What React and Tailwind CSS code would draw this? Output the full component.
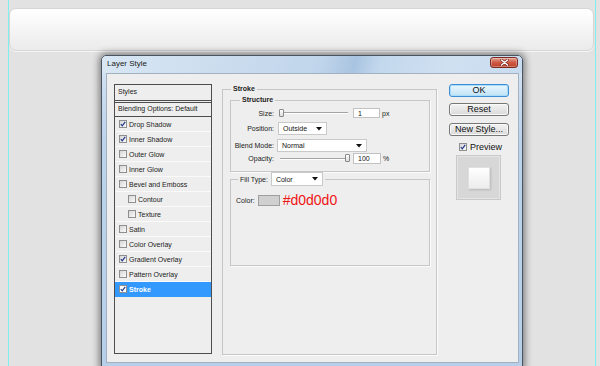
import React from "react";

const Tri = () => (
  <svg width="6" height="4" viewBox="0 0 6 4"><polygon points="0,0 6,0 3,3.5" fill="#111" /></svg>
);

function Check({ checked, light }) {
  return (
    <span className={"inline-flex w-[8px] h-[8px] shrink-0 items-center justify-center border border-[#8e8f8f] " + (light ? "bg-white" : "bg-gradient-to-br from-[#d6d6d6] to-[#fbfbfb]")}>
      {checked && (
        <svg width="6" height="6" viewBox="0 0 6 6">
          <path d="M0.8 3.2 L2.3 4.9 L5.2 0.8" fill="none" stroke="#23398a" strokeWidth="1.2" />
        </svg>
      )}
    </span>
  );
}

function Row({ label, checked, indent, selected }) {
  return (
    <div className={"flex h-[15px] items-center border-b " + (selected ? "bg-[#3399ff] border-[#3399ff] text-white font-bold" : "border-[#fafafa] text-[#222]") + (indent ? " pl-[13px]" : " pl-[4px]")}>
      <Check checked={checked} light={selected} />
      <span className="ml-[2px] leading-none">{label}</span>
    </div>
  );
}

function Select({ w, h, label }) {
  return (
    <div className={"flex items-center justify-between bg-white border border-[#c9c9c9] pl-[4px] pr-[4px] " + w + " " + h}>
      <span className="leading-none text-[#111]">{label}</span>
      <Tri />
    </div>
  );
}

function Slider({ thumb }) {
  return (
    <div className="relative ml-[4px] w-[70px] h-[9px] flex items-center">
      <div className="w-full ml-[2px] h-[2px] border-t border-[#a3a3a3] border-b border-b-white" />
      <div className={"absolute top-[0px] w-[5px] h-[8px] rounded-[1px] border border-[#8a8a8a] bg-gradient-to-b from-white to-[#dcdcdc] " + thumb} />
    </div>
  );
}

function Btn({ children, primary, cls }) {
  return (
    <div className={"flex items-center justify-center w-[60px] h-[13px] rounded-[3px] border text-[9px] leading-none text-[#111] " + (primary ? "border-[#3c8fd6] bg-gradient-to-b from-[#eaf6fd] to-[#bfe3f7] shadow-[inset_0_0_0_1px_#a8dcf7]" : "border-[#777] bg-gradient-to-b from-[#f3f3f3] to-[#d9d9d9] shadow-[inset_0_0_0_1px_#fafafa]") + " " + (cls || "")}>
      {children}
    </div>
  );
}

export default function App() {
  return (
    <div className="w-[600px] h-[366px] overflow-hidden bg-[#e2e2e2] font-['Liberation_Sans',Arial,sans-serif]">
      <div className="ml-[8px] w-[588px] h-full border-x border-[#7fefef] pt-[8px]">
        <div className="mr-[1px] h-[43px] rounded-[7px] border border-[#d6d6d6] bg-gradient-to-b from-white to-[#ebebeb] shadow-[0_1px_0_#f6f6f6]" />

        <div className="ml-[92px] mt-[4px] w-[422px] border border-[#4a5563] rounded-t-[5px] bg-[linear-gradient(180deg,#dce8f4_0%,#cadcef_12%,#bcd3eb_28%,#b7cfe9_100%)] shadow-[0_0_7px_2px_rgba(0,0,0,0.45)]">
          <div className="relative h-[17px] flex items-start justify-between pl-[5px] pr-[4px] rounded-t-[5px] bg-[linear-gradient(105deg,#d9e7f4_0%,#cbdcee_30%,#c0d5eb_52%,#a9c4e1_60%,#c3d8ed_66%,#cfe0f1_82%,#c9dcef_100%)]">
            <span className="mt-[4px] text-[8px] leading-none text-[#1b1b1b]">Layer Style</span>
            <div className="mt-[1px] w-[28px] h-[11px] flex items-center justify-center rounded-[3px] border border-[#7a2b20] bg-gradient-to-b from-[#e6a090] via-[#cd5a45] to-[#bf3f2a] shadow-[inset_0_0_0_1px_rgba(255,255,255,0.3)]">
              <svg width="9" height="7" viewBox="0 0 9 7">
                <path d="M1.5 1 L7.5 6 M7.5 1 L1.5 6" stroke="#6b231a" strokeWidth="2.6" strokeLinecap="round" />
                <path d="M1.5 1 L7.5 6 M7.5 1 L1.5 6" stroke="#fff" strokeWidth="1.5" strokeLinecap="round" />
              </svg>
            </div>
          </div>
          <div className="ml-[4px] mr-[3px] mb-[4px] h-[290px] border border-[#a2b1c2] bg-[#eeeeee] flex items-start pl-[7px] pt-[10px] text-[7px]">
            <div className="w-[98px] h-[270px] border border-[#4e4e4e] bg-[#eeeeee] flex flex-col">
              <div className="h-[16px] flex items-center pl-[3px] border-b border-[#4e4e4e] text-[#222]">Styles</div>
              <div className="mt-[1px] h-[15px] flex items-center pl-[3px] border-y border-[#4e4e4e] text-[#222]">Blending Options: Default</div>
              <Row label="Drop Shadow" checked />
              <Row label="Inner Shadow" checked />
              <Row label="Outer Glow" />
              <Row label="Inner Glow" />
              <Row label="Bevel and Emboss" />
              <Row label="Contour" indent />
              <Row label="Texture" indent />
              <Row label="Satin" />
              <Row label="Color Overlay" />
              <Row label="Gradient Overlay" checked />
              <Row label="Pattern Overlay" />
              <Row label="Stroke" checked selected />
            </div>

            <fieldset className="ml-[10px] w-[215px] h-[271px] border border-[#c6c6c6] shadow-[1px_1px_0_#fbfbfb] p-0 min-w-0">
              <legend className="ml-[8px] px-[2px] text-[7px] leading-[10px] font-bold text-[#222]">Stroke</legend>
              <fieldset className="ml-[7px] mt-[1px] w-[200px] h-[77px] border border-[#c6c6c6] shadow-[1px_1px_0_#fbfbfb] p-0 min-w-0">
                <legend className="ml-[9px] px-[2px] text-[7px] leading-[10px] font-bold text-[#222]">Structure</legend>
                <div className="mt-[2px] h-[12px] flex items-center">
                  <span className="w-[43px] text-right text-[#222] leading-none">Size:</span>
                  <Slider thumb="left-[1px]" />
                  <div className="ml-[5px] w-[27px] h-[10px] bg-white border border-[#c2c2c2] flex items-center pl-[4px] leading-none text-[#111]">1</div>
                  <span className="ml-[2px] leading-none text-[#222]">px</span>
                </div>
                <div className="mt-[3px] h-[13px] flex items-center">
                  <span className="w-[43px] text-right text-[#222] leading-none">Position:</span>
                  <div className="ml-[4px]"><Select w="w-[49px]" h="h-[13px]" label="Outside" /></div>
                </div>
                <div className="mt-[4px] h-[13px] flex items-center">
                  <span className="w-[43px] text-right text-[#222] leading-none whitespace-nowrap">Blend Mode:</span>
                  <div className="ml-[3px]"><Select w="w-[90px]" h="h-[13px]" label="Normal" /></div>
                </div>
                <div className="mt-[1px] h-[11px] flex items-center">
                  <span className="w-[43px] text-right text-[#222] leading-none">Opacity:</span>
                  <Slider thumb="left-[67px]" />
                  <div className="ml-[5px] w-[28px] h-[11px] bg-white border border-[#c2c2c2] flex items-center pl-[4px] leading-none text-[#111]">100</div>
                  <span className="ml-[2px] leading-none text-[#222]">%</span>
                </div>
              </fieldset>
              <fieldset className="ml-[7px] w-[200px] h-[94px] border border-[#c6c6c6] shadow-[1px_1px_0_#fbfbfb] p-0 min-w-0">
                <legend className="ml-[7px] px-[2px] flex items-center text-[7px]">
                  <span className="leading-none text-[#222]">Fill Type:</span>
                  <div className="ml-[3px]"><Select w="w-[52px]" h="h-[14px]" label="Color" /></div>
                </legend>
                <div className="mt-[6px] h-[16px] flex items-center pl-[5px]">
                  <span className="leading-none text-[#222]">Color:</span>
                  <div className="ml-[3px] w-[22px] h-[11px] bg-[#d0d0d0] border border-[#9f9f9f]" />
                  <span className="ml-[3px] text-[14px] leading-[16px] text-[#f01414]">#d0d0d0</span>
                </div>
              </fieldset>
            </fieldset>

            <div className="ml-[12px] w-[60px] flex flex-col">
              <Btn primary>OK</Btn>
              <Btn cls="mt-[6px]">Reset</Btn>
              <Btn cls="mt-[7px]">New Style...</Btn>
              <div className="mt-[7px] ml-[10px] h-[8px] flex items-center">
                <Check checked />
                <span className="ml-[3px] text-[9px] leading-none text-[#111]">Preview</span>
              </div>
              <div className="mt-[4px] ml-[7px] w-[45px] h-[45px] bg-[#d7d7d7] border border-[#c9c9c9] shadow-[inset_0_0_0_1px_#e4e4e4] flex items-center justify-center">
                <div className="w-[22px] h-[22px] bg-gradient-to-b from-white to-[#ececec] border border-[#e0e0e0] shadow-[1px_1px_2px_rgba(0,0,0,0.15)]" />
              </div>
            </div>
          </div>
        </div>
      </div>
    </div>
  );
}
